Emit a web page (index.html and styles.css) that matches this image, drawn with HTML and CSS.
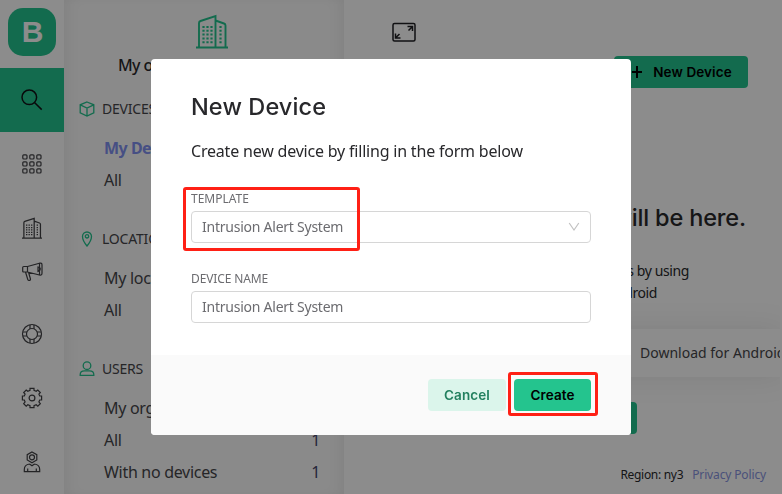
FILE: index.html
```html
<!DOCTYPE html>
<html lang="en">
<head>
<meta charset="utf-8">
<title>New Device</title>
<link rel="stylesheet" href="styles.css">
</head>
<body>
<div class="app">
  <nav class="rail">
    <a class="logo"><span>B</span></a>
    <a class="rail-item active">
      <svg width="22" height="22" viewBox="0 0 22 22"><circle cx="8.3" cy="8.3" r="7.3"/><path d="M13.5 13.5 20.7 20.6"/></svg>
    </a>
    <a class="rail-item">
      <svg width="20" height="20" viewBox="0 0 20 20"><g><rect x=".8" y=".8" width="4.2" height="4.2" rx="1"/><rect x="7.8" y=".8" width="4.2" height="4.2" rx="1"/><rect x="14.8" y=".8" width="4.2" height="4.2" rx="1"/><rect x=".8" y="7.8" width="4.2" height="4.2" rx="1"/><rect x="7.8" y="7.8" width="4.2" height="4.2" rx="1"/><rect x="14.8" y="7.8" width="4.2" height="4.2" rx="1"/><rect x=".8" y="14.8" width="4.2" height="4.2" rx="1"/><rect x="7.8" y="14.8" width="4.2" height="4.2" rx="1"/><rect x="14.8" y="14.8" width="4.2" height="4.2" rx="1"/></g></svg>
    </a>
    <a class="rail-item">
      <svg width="20" height="22" viewBox="0 0 32 35"><path d="M0 33.5h32M3 33V9Q3 7.5 4.5 7L19.5 2V33M19.5 6.5 28 9.5Q29.5 10 29.5 11.500V33"/><path class="windows" d="M7.500 12v19M11.500 12v19M15.500 12v19M24.500 12v19"/></svg>
    </a>
    <a class="rail-item short">
      <svg width="21" height="20" viewBox="0 0 21 20"><path d="M1.700 4.500H5.500V10H1.700Q.7 10 .7 9V5.500Q.7 4.500 1.700 4.500ZM5.500 4.500 17.500 1.200V13L5.500 10M17.500 1.200Q20 .5 20 3V11Q20 13.800 17.500 13M3.500 10 5.800 17.500Q6.200 18.600 7.400 18.400 8.800 18.100 8.400 16.800L6.600 10.500M16 5Q18.300 5.200 18.300 7T16 9.500Z"/></svg>
    </a>
    <a class="rail-item">
      <svg width="22" height="22" viewBox="0 0 22 22"><circle cx="11" cy="11" r="9.500"/><circle cx="11" cy="11" r="5.500"/><path d="M9 1.700V5.900M13 1.700V5.900M9 16.100V20.300M13 16.100V20.300M1.700 9H5.900M1.700 13H5.900M16.100 9H20.300M16.100 13H20.300"/></svg>
    </a>
    <a class="rail-item">
      <svg width="22" height="22" viewBox="0 0 22 22"><circle cx="11" cy="11" r="2.900"/><path d="M9 1.400H13V3.400L15.200 4.300 16.800 3 19.300 5.500 17.900 7.100 18.700 9H20.600V13H18.700L17.900 15 19.300 16.600 16.800 19.100 15.200 17.800 13 18.700V20.600H9V18.700L6.800 17.800 5.200 19.100 2.700 16.600 4.100 15 3.300 13H1.400V9H3.300L4.100 7.100 2.700 5.500 5.200 3 6.800 4.300 9 3.400Z"/></svg>
    </a>
    <a class="rail-item">
      <svg width="18" height="22" viewBox="0 0 18 22"><path d="M9 1 13.800 3.700V9L9 11.700 4.200 9V3.700ZM6.500 13 9 14.800 11.500 13M6.500 13Q1.300 13.700 1.300 18.500V20.700H16.700V18.500Q16.700 13.700 11.500 13M4.700 17.500V20.500M13.300 17.500V20.500"/><circle cx="9" cy="6.300" r="2.500"/></svg>
    </a>
  </nav>

  <aside class="panel">
    <header class="org">
      <svg width="32" height="35" viewBox="0 0 32 35"><path d="M0 33.500h32M3 33V9Q3 7.500 4.500 7L19.500 2V33M19.500 6.500 28 9.500Q29.500 10 29.500 11.500V33"/><path class="windows" d="M7.500 12v19M11.500 12v19M15.500 12v19M24.500 12v19"/></svg>
      <div class="org-name">My organization</div>
    </header>
    <section>
      <h3><svg width="16" height="16" viewBox="0 0 16 16"><path d="M8 1 14.800 3.800V11.800L8 15 1.200 11.800V3.800ZM1.200 3.800 8 7 14.800 3.800M8 7V15"/></svg>DEVICES</h3>
      <ul><li class="current"><span>My Devices</span></li><li><span>All</span></li></ul>
    </section>
    <section>
      <h3><svg width="16" height="16" viewBox="0 0 16 16"><path d="M8 15Q3.500 9.500 3.500 5.500A4.500 4.500 0 0 1 12.500 5.500Q12.500 9.500 8 15Z"/><circle cx="8" cy="5.300" r="1.700"/></svg>LOCATIONS</h3>
      <ul><li><span>My locations</span></li><li><span>All</span></li></ul>
    </section>
    <section>
      <h3><svg width="16" height="16" viewBox="0 0 16 16"><circle cx="8" cy="4.700" r="3.800"/><path d="M1.200 14.400V13.600Q1.200 9.800 5.500 9.800H10.500Q14.800 9.800 14.800 13.600V14.400Z"/></svg>USERS</h3>
      <ul><li><span>My organization</span><b>1</b></li><li><span>All</span><b>1</b></li><li><span>With no devices</span><b>1</b></li></ul>
    </section>
  </aside>

  <main class="content">
    <div class="toolbar">
      <svg width="24" height="20" viewBox="0 0 24 20"><rect x="1" y="1.500" width="22" height="17.500" rx="1.500"/><path d="M15.500 4.500H20.500V9M20.300 4.700 16.500 8.500M3.500 11.500V16H8.500M3.700 15.800 7.500 12"/></svg>
    </div>
    <button class="btn primary new"><svg width="10" height="12" viewBox="0 0 10 12"><path d="M5 0V12M0 6H10"/></svg>New Device</button>
    <h2>All of your devices will be here.</h2>
    <p class="hint"><span class="l1">You can activate new devices by using</span><span class="l2">your app for iOS or Android</span></p>
    <div class="stores"><div class="store">Download for Android</div></div>
    <button class="btn primary more">New Device</button>
    <footer class="legal"><span>Region: ny3</span><a>Privacy Policy</a></footer>
  </main>
</div>

<div class="overlay">
  <div class="modal" role="dialog">
    <div class="modal-body">
      <h1>New Device</h1>
      <p>Create new device by filling in the form below</p>
      <div class="field">
        <label>TEMPLATE</label>
        <div class="input">Intrusion Alert System
          <svg width="12" height="10" viewBox="0 0 12 10"><path d="M1.200 1 6 8 10.800 1"/></svg>
        </div>
        <i class="mark mark-template"></i>
      </div>
      <div class="field">
        <label class="wide">DEVICE NAME</label>
        <div class="input">Intrusion Alert System</div>
      </div>
    </div>
    <div class="modal-footer">
      <button class="btn cancel">Cancel</button>
      <button class="btn primary create">Create<i class="mark mark-create"></i></button>
    </div>
  </div>
</div>
</body>
</html>
```
FILE: styles.css
```css
* { box-sizing: border-box; }

body {
  margin: 0;
  width: 782px;
  height: 494px;
  overflow: hidden;
  background: #fff;
  color: #28282b;
  font: 16px/32px "Noto Sans", sans-serif;
  letter-spacing: -0.3px;
}

h1, h2, h3, p, ul { margin: 0; padding: 0; font-weight: 400; }
ul { list-style: none; }
svg { display: block; fill: none; stroke: currentColor; flex: none; }
button { border: 0; padding: 0; font: inherit; }

.app { display: flex; height: 494px; }

/* Icon rail */
.rail { width: 64px; display: flex; flex-direction: column; align-items: center; padding-top: 8px; color: #404044; }
.logo {
  width: 48px;
  height: 48px;
  margin-bottom: 12px;
  border-radius: 15px;
  background: #24c48e;
  color: #fff;
  display: flex;
  align-items: center;
  justify-content: center;
  font: 700 30px/48px "Liberation Sans", sans-serif;
}
.logo span { padding-left: 1px; }
.rail-item { width: 64px; height: 64px; display: flex; align-items: center; justify-content: center; flex: none; }
.rail-item svg { stroke-width: 1.2; }
.rail-item svg[viewBox="0 0 32 35"] { stroke-width: 2; }
.rail-item.active { background: #24c48e; color: #101014; }
.rail-item.active svg { stroke-width: 1.5; }
.rail-item.short { height: 42px; align-items: flex-start; padding-top: 2px; }
.windows { stroke-width: 2.2; stroke-dasharray: 2 1.800; }

/* Navigation panel */
.panel {
  width: 280px;
  background: #fbfbfb;
  box-shadow: inset 10px 0 16px -8px rgba(0,0,0,.07), inset -10px 0 16px -8px rgba(0,0,0,.07);
}
.org { height: 86px; padding-top: 14px; display: flex; flex-direction: column; align-items: center; }
.org svg { margin-left: 15px; color: #24c48e; stroke-width: 1.9; }
.org-name { width: 172px; font-weight: 500; letter-spacing: -.6px; }
.panel section { margin-bottom: 20px; }
.panel h3 {
  height: 46px;
  padding-left: 15px;
  display: flex;
  align-items: center;
  gap: 7px;
  color: #46464a;
  font-size: 14px;
  letter-spacing: -.2px;
}
.panel h3 svg { color: #24c48e; stroke-width: 1.3; }
.panel li { height: 32px; display: flex; justify-content: space-between; padding: 0 24px 0 40px; color: #46464a; }
.panel b { font-weight: 400; color: #444468; }
.panel .current { color: #8090f0; font-weight: 700; letter-spacing: -.5px; }

/* Page content */
.content { width: 436px; overflow: hidden; display: flex; flex-direction: column; align-items: flex-end; }
.toolbar { align-self: flex-start; height: 56px; padding: 22px 0 0 48px; }
.toolbar svg { stroke-width: 1.5; color: #202024; }
.btn {
  height: 32px;
  border-radius: 4px;
  display: flex;
  align-items: center;
  justify-content: center;
  flex: none;
  font: 600 13.5px/32px Inter, sans-serif;
  letter-spacing: .1px;
}
.primary { background: #24c48e; color: #000; }
.new { width: 134px; margin-right: 32px; gap: 11px; padding-left: 2px; }
.new svg { stroke-width: 2; }
.content h2 { margin: 112px 34px 0 0; font: 500 23.5px/36px Inter, sans-serif; letter-spacing: -.15px; white-space: nowrap; }
.hint { margin-top: 24px; font-size: 14px; line-height: 22px; letter-spacing: -.4px; display: flex; flex-direction: column; align-items: flex-end; white-space: nowrap; }
.l1 { padding-right: 91px; }
.l2 { padding-right: 123px; }
.stores { align-self: stretch; margin-top: 25px; display: flex; padding-left: 250px; }
.store {
  flex: 1;
  height: 48px;
  padding-left: 46px;
  background: #fff;
  box-shadow: 0 0 32px rgba(0,0,0,.09);
  color: #46464a;
  font-size: 14px;
  line-height: 48px;
  letter-spacing: 0;
  white-space: nowrap;
}
.more { width: 134px; margin: 25px 143px 0 0; }
.legal { display: flex; gap: 9px; margin: 30px 14px 0 0; font-size: 12px; line-height: 22px; }
.legal span { letter-spacing: -.3px; }
.legal a { color: #8894e0; letter-spacing: -.14px; }

/* Dialog */
.overlay { position: fixed; inset: 0; padding-top: 59px; background: rgba(0,0,0,.45); }
.modal { width: 480px; height: 376px; margin: 0 auto; border-radius: 4px; background: #fff; overflow: hidden; }
.modal-body { height: 296px; padding: 32px 40px 0; }
.modal h1 { font: 500 23.5px/32px Inter, sans-serif; letter-spacing: .1px; }
.modal p { margin: 12px 0 19px; letter-spacing: -.2px; white-space: nowrap; }
.field { position: relative; height: 80px; }
.field label { display: block; height: 26px; padding-top: 2px; font-size: 12px; line-height: 22px; letter-spacing: 0; color: #6c6c70; }
.field label.wide { letter-spacing: -.12px; }
.input {
  height: 32px;
  margin-top: -1px;
  padding: 0 10px;
  display: flex;
  align-items: center;
  justify-content: space-between;
  border: 1px solid #d6d6d6;
  border-radius: 4px;
  color: #6c6c70;
  font-size: 14px;
  line-height: 30px;
  letter-spacing: -.24px;
}
.input svg { color: #c2c2c2; stroke-width: 1.2; }
.modal-footer { height: 80px; padding: 24px 40px; display: flex; justify-content: flex-end; gap: 8px; background: #fafafa; }
.cancel { width: 78px; background: #dbf5eb; color: #23805f; }
.create { position: relative; width: 77px; }

/* Highlight frames */
.mark { position: absolute; border: 3px solid #ff2015; border-radius: 3px; pointer-events: none; }
.mark-template { left: -8px; top: 1px; width: 177px; height: 64px; }
.mark-create { left: -6px; top: -7px; width: 90px; height: 44px; }
```
